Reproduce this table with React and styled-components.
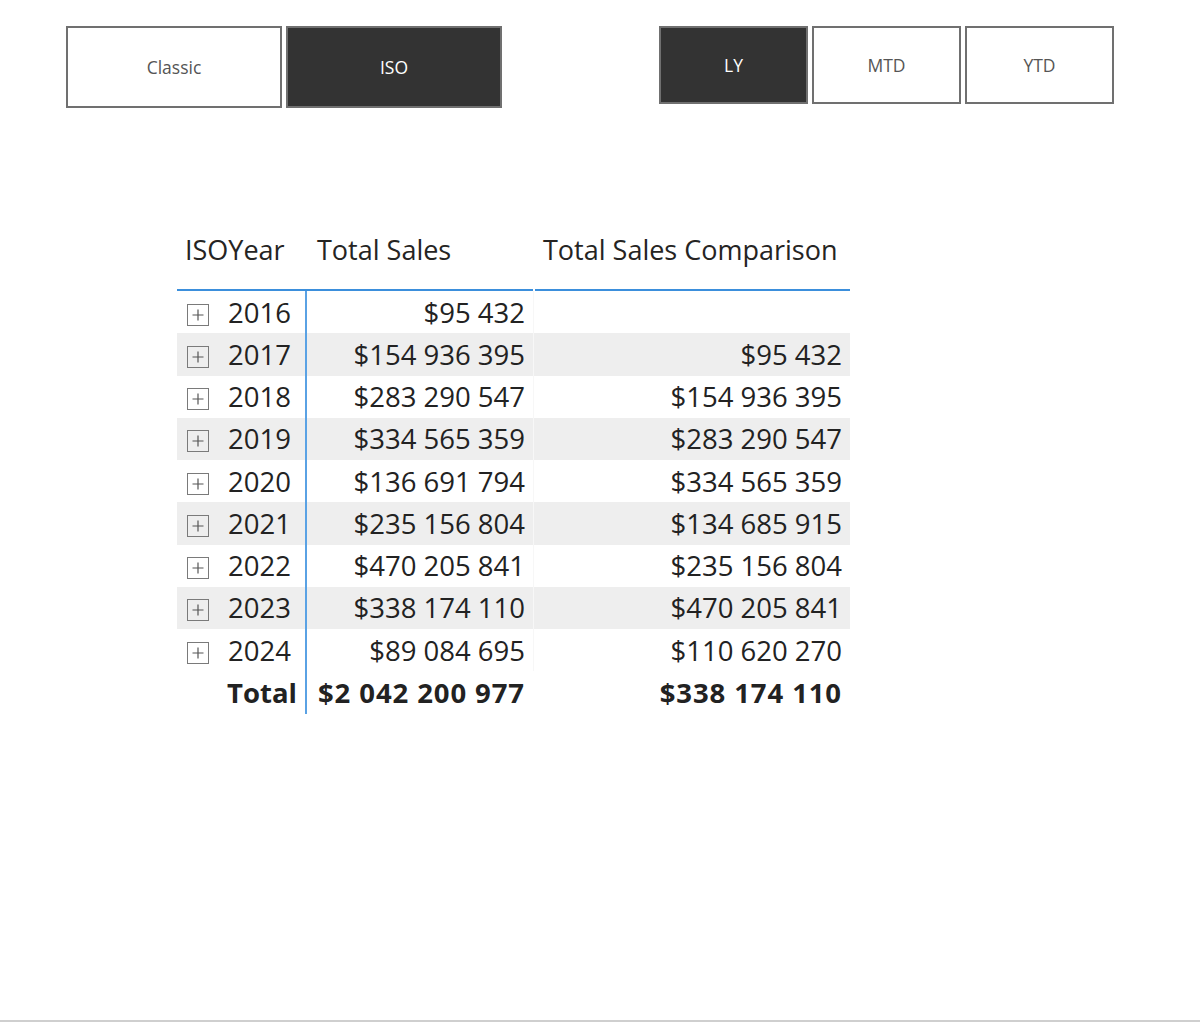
import React from 'react'
import styled, { createGlobalStyle } from 'styled-components'

const GlobalStyle = createGlobalStyle`
  html, body {
    margin: 0;
    padding: 0;
    background: #ffffff;
  }
  body {
    font-family: "Open Sans", "Noto Sans", "Liberation Sans", sans-serif;
  }
`

const Page = styled.div`
  height: 1022px;
  box-sizing: border-box;
  border-bottom: 2px solid #cfcfcf;
  background: #fff;
  padding-top: 26px;
`

const Toolbar = styled.div`
  display: flex;
  align-items: flex-start;
  padding-left: 66px;
`

const Slicer = styled.div`
  display: flex;
  gap: ${p => p.gap || 4}px;
  margin-left: ${p => p.offset || 0}px;
`

const Tile = styled.button`
  width: ${p => p.w}px;
  height: ${p => p.h}px;
  box-sizing: border-box;
  border: 2px solid #707070;
  background: ${p => (p.active ? '#333333' : '#ffffff')};
  color: ${p => (p.active ? '#ffffff' : '#555555')};
  font-family: "Open Sans", "Noto Sans", sans-serif;
  font-size: 17.5px;
  padding: 0;
  cursor: pointer;
`

const Matrix = styled.div`
  margin-top: 118px;
  margin-left: 177px;
  width: 673px;
  display: grid;
  grid-template-columns: 130px 226px 317px;
  font-family: "Open Sans", "Noto Sans", sans-serif;
  color: #222222;
`

const Head = styled.div`
  height: 65px;
  box-sizing: border-box;
  border-bottom: 2px solid #3b8fdc;
  font-size: 27px;
  line-height: 32px;
  padding-top: 8px;
  padding-left: ${p => p.pl || 0}px;
  margin-left: ${p => p.gap || 0}px;
  color: #252423;
  white-space: nowrap;
`

const Cell = styled.div`
  height: 42.25px;
  display: flex;
  align-items: center;
  justify-content: ${p => (p.left ? 'flex-start' : 'flex-end')};
  box-sizing: border-box;
  padding-right: ${p => (p.left ? 0 : p.pr || 8)}px;
  padding-left: ${p => (p.left ? 10 : 0)}px;
  font-size: 27.5px;
  font-weight: ${p => (p.total ? 700 : 400)};
  letter-spacing: ${p => (p.spaced ? '0.9px' : '0')};
  background: ${p => (p.striped ? '#eeeeee' : 'transparent')};
  border-right: ${p => (p.divider ? '2px solid #5aa2e4' : 'none')};
  border-left: ${p => (p.seam ? '1px solid #f7f7f7' : 'none')};
  white-space: nowrap;
`

const Expander = styled.span`
  width: 22px;
  height: 22px;
  box-sizing: border-box;
  border: 1px solid #7a7a7a;
  display: inline-flex;
  align-items: center;
  justify-content: center;
  margin-right: 19px;
  margin-top: 5px;
  flex: none;
`

const PlusIcon = () => (
  <svg width="14" height="14" viewBox="0 0 14 14">
    <path d="M7 1.5v11M1.5 7h11" stroke="#555" strokeWidth="1.2" fill="none" />
  </svg>
)

const rows = [
  ['2016', '$95 432', ''],
  ['2017', '$154 936 395', '$95 432'],
  ['2018', '$283 290 547', '$154 936 395'],
  ['2019', '$334 565 359', '$283 290 547'],
  ['2020', '$136 691 794', '$334 565 359'],
  ['2021', '$235 156 804', '$134 685 915'],
  ['2022', '$470 205 841', '$235 156 804'],
  ['2023', '$338 174 110', '$470 205 841'],
  ['2024', '$89 084 695', '$110 620 270'],
]

export default function App() {
  return (
    <Page>
      <GlobalStyle />
      <Toolbar>
        <Slicer>
          <Tile w={216} h={82}>Classic</Tile>
          <Tile w={216} h={82} active>ISO</Tile>
        </Slicer>
        <Slicer offset={157}>
          <Tile w={149} h={78} active>LY</Tile>
          <Tile w={149} h={78}>MTD</Tile>
          <Tile w={149} h={78}>YTD</Tile>
        </Slicer>
      </Toolbar>

      <Matrix>
        <Head pl={8}>ISOYear</Head>
        <Head pl={10}>Total Sales</Head>
        <Head pl={8} gap={2}>Total Sales Comparison</Head>

        {rows.map(([year, sales, comp], i) => {
          const striped = i % 2 === 1
          return (
            <React.Fragment key={year}>
              <Cell left striped={striped} divider>
                <Expander><PlusIcon /></Expander>
                {year}
              </Cell>
              <Cell striped={striped}>{sales}</Cell>
              <Cell striped={striped} seam>{comp}</Cell>
            </React.Fragment>
          )
        })}

        <Cell total divider pr={8}>Total</Cell>
        <Cell total spaced>$2 042 200 977</Cell>
        <Cell total spaced>$338 174 110</Cell>
      </Matrix>
    </Page>
  )
}
